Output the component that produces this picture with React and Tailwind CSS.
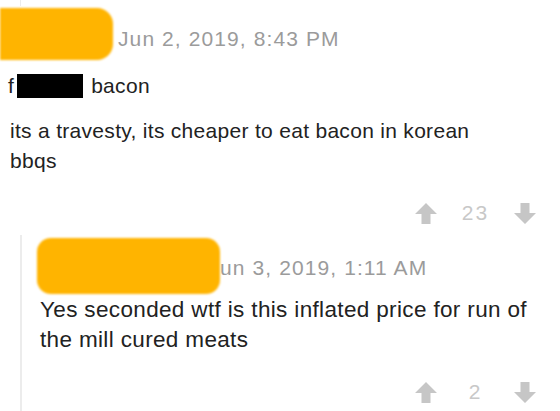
import React from "react";

function UpArrow() {
  return (
    <svg width="22" height="21" viewBox="0 0 22 21" className="block">
      <path d="M11 0 L22 11 L15.5 11 L15.5 21 L6.5 21 L6.5 11 L0 11 Z" fill="#c6c6c6" />
    </svg>
  );
}

function DownArrow() {
  return (
    <svg width="22" height="21" viewBox="0 0 22 21" className="block">
      <path d="M6.5 0 L15.5 0 L15.5 10 L22 10 L11 21 L0 10 L6.5 10 Z" fill="#c6c6c6" />
    </svg>
  );
}

function Votes({ count }) {
  return (
    <div className="flex items-center justify-end pr-[24px]">
      <UpArrow />
      <span className="w-[77px] text-center text-[21px] leading-[24px] tracking-[2px] text-[#c8c8c8]">
        {count}
      </span>
      <DownArrow />
    </div>
  );
}

export default function App() {
  return (
    <div className="w-[560px] h-[411px] overflow-hidden bg-white font-['Liberation_Sans',_Arial,_sans-serif] text-[#222]">
      <div className="ml-[20px] h-[6px] w-px bg-[#ececec]" />
      <div className="mt-[2px] flex items-start">
        <div className="h-[52px] w-[113px] rounded-r-[16px] rounded-l-none bg-[#ffb400] blur-[1px]" />
        <div className="ml-[5px] mt-[19px] text-[21px] leading-[24px] tracking-[1.1px] text-[#9b9b9b]">
          Jun 2, 2019, 8:43 PM
        </div>
      </div>
      <div className="mt-[13px] pl-[8px] flex items-center text-[21px] leading-[26px] tracking-[0.3px]">
        <span>f</span>
        <span className="ml-[3px] inline-block h-[24px] w-[66px] bg-black" />
        <span className="ml-[8px]">bacon</span>
      </div>
      <p className="mt-[17px] pl-[10px] w-[510px] text-[21px] leading-[30px] tracking-[0.3px]">
        its a travesty, its cheaper to eat bacon in korean bbqs
      </p>
      <div className="mt-[25px]">
        <Votes count="23" />
      </div>
      <div className="mt-[10px] ml-[20px] border-l-2 border-[#ececec] pl-[15px] h-[220px]">
        <div className="pt-[3px] flex items-start">
          <div className="h-[56px] w-[183px] rounded-[14px] bg-[#ffb400] blur-[1px]" />
          <div className="mt-[18px] text-[21px] leading-[24px] tracking-[1.1px] text-[#9b9b9b]">
            un 3, 2019, 1:11 AM
          </div>
        </div>
        <p className="mt-[1px] pl-[3px] w-[500px] text-[22.5px] leading-[30px] tracking-[0.35px]">
          Yes seconded wtf is this inflated price for run of the mill cured meats
        </p>
        <div className="mt-[25px] -ml-[37px]">
          <Votes count="2" />
        </div>
      </div>
    </div>
  );
}
